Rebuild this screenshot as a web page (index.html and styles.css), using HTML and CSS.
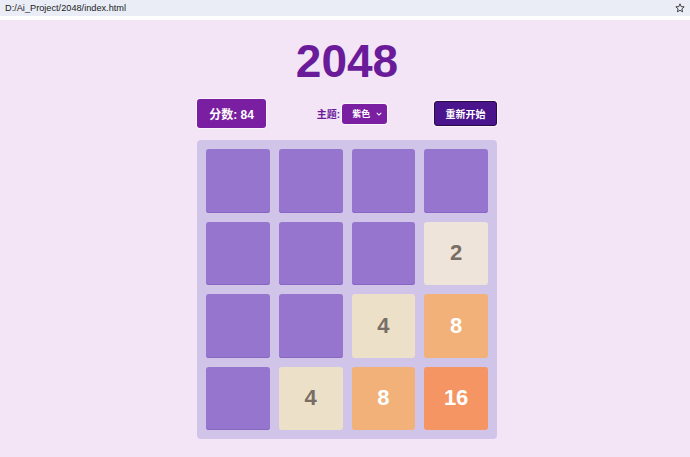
FILE: index.html
```html
<!DOCTYPE html>
<html lang="zh">
<head>
<meta charset="utf-8">
<title>2048</title>
<link rel="stylesheet" href="styles.css">
</head>
<body>
<div class="chrome">
  <div class="address">
    <span class="url">D:/Ai_Project/2048/index.html</span>
    <svg class="star" viewBox="0 0 12 12" width="10" height="10"><path d="M6 1 L7.4 4.3 L11 4.6 L8.3 7 L9.1 10.6 L6 8.7 L2.9 10.6 L3.7 7 L1 4.6 L4.6 4.3 Z" fill="none" stroke="#333" stroke-width="1.1" stroke-linejoin="round"/></svg>
  </div>
  <div class="chrome-gap"></div>
</div>
<main class="page">
  <h1 class="title">2048</h1>
  <div class="controls">
    <div class="score">分数: 84</div>
    <div class="theme">
      <span class="theme-label">主题:</span>
      <div class="select"><span>紫色</span>
        <svg class="chev" viewBox="0 0 8 5" width="6" height="4"><path d="M1 1 L4 4 L7 1" fill="none" stroke="#fff" stroke-width="1.4"/></svg>
      </div>
    </div>
    <button class="restart">重新开始</button>
  </div>
  <div class="board">
    <div class="tile"></div>
    <div class="tile"></div>
    <div class="tile"></div>
    <div class="tile"></div>
    <div class="tile"></div>
    <div class="tile"></div>
    <div class="tile"></div>
    <div class="tile t2">2</div>
    <div class="tile"></div>
    <div class="tile"></div>
    <div class="tile t4">4</div>
    <div class="tile t8">8</div>
    <div class="tile"></div>
    <div class="tile t4">4</div>
    <div class="tile t8">8</div>
    <div class="tile t16">16</div>
  </div>
</main>
</body>
</html>
```

FILE: styles.css
```css
* { box-sizing: border-box; }
html, body { margin: 0; padding: 0; }
body {
  background: #f3e5f5;
  font-family: "Liberation Sans", Arial, "Noto Sans CJK SC", sans-serif;
  height: 457px;
  overflow: hidden;
}
.chrome { background: #fff; }
.address {
  height: 16px;
  background: #eaedf6;
  display: flex;
  align-items: center;
  justify-content: space-between;
  padding: 0 5px 0 5px;
}
.url {
  font-family: "Liberation Sans", Arial, sans-serif;
  font-size: 9.2px;
  color: #222;
}
.star { display: block; margin-right: 0; }
.chrome-gap { height: 4px; background: #fff; }
.page {
  display: flex;
  flex-direction: column;
  align-items: center;
  padding-top: 14px;
  padding-left: 4px;
}
.title {
  margin: 0;
  font-size: 46px;
  line-height: 55px;
  font-weight: bold;
  color: #6a1b9a;
}
.controls {
  width: 300px;
  margin-top: 10px;
  display: flex;
  justify-content: space-between;
  align-items: center;
}
.score {
  width: 69px;
  height: 29px;
  background: #7b1fa2;
  color: #fff;
  font-weight: bold;
  font-size: 12px;
  border-radius: 3px;
  display: flex;
  align-items: center;
  justify-content: center;
  box-shadow: 0 0 0 1px #fff8;
}
.theme {
  display: flex;
  align-items: center;
  gap: 2px;
  margin-left: 4px;
}
.theme-label {
  font-size: 10px;
  font-weight: bold;
  color: #6a1b9a;
}
.select {
  width: 45px;
  height: 20px;
  background: #7b1fa2;
  border-radius: 3px;
  color: #fff;
  font-size: 9px;
  font-weight: bold;
  display: flex;
  align-items: center;
  justify-content: space-between;
  padding: 0 5px 0 10px;
  box-shadow: 0 0 0 1px #fff8;
}
.chev { display: block; }
.restart {
  width: 63px;
  height: 25px;
  background: #4a148c;
  border: 1px solid #2a0b45;
  border-radius: 3px;
  color: #fff;
  font-family: "Liberation Sans", Arial, "Noto Sans CJK SC", sans-serif;
  font-size: 10px;
  font-weight: bold;
  padding: 0;
  box-shadow: 0 0 0 1px #fff8;
}
.board {
  margin-top: 12px;
  width: 300px;
  height: 299px;
  background: #d1c4e9;
  border-radius: 4px;
  padding: 9px;
  display: grid;
  grid-template-columns: repeat(4, 1fr);
  grid-template-rows: repeat(4, 1fr);
  gap: 9px;
}
.tile {
  background: #9575cd;
  border-radius: 3px;
  box-shadow: inset 0 -1px 0 #8a66c4;
  display: flex;
  align-items: center;
  justify-content: center;
  font-size: 22px;
  font-weight: bold;
}
.t2 { background: #eee4da; color: #776e65; box-shadow: none; }
.t4 { background: #ede0c8; color: #776e65; box-shadow: none; }
.t8 { background: #f2b179; color: #fff; box-shadow: none; }
.t16 { background: #f59563; color: #fff; box-shadow: none; }
```
